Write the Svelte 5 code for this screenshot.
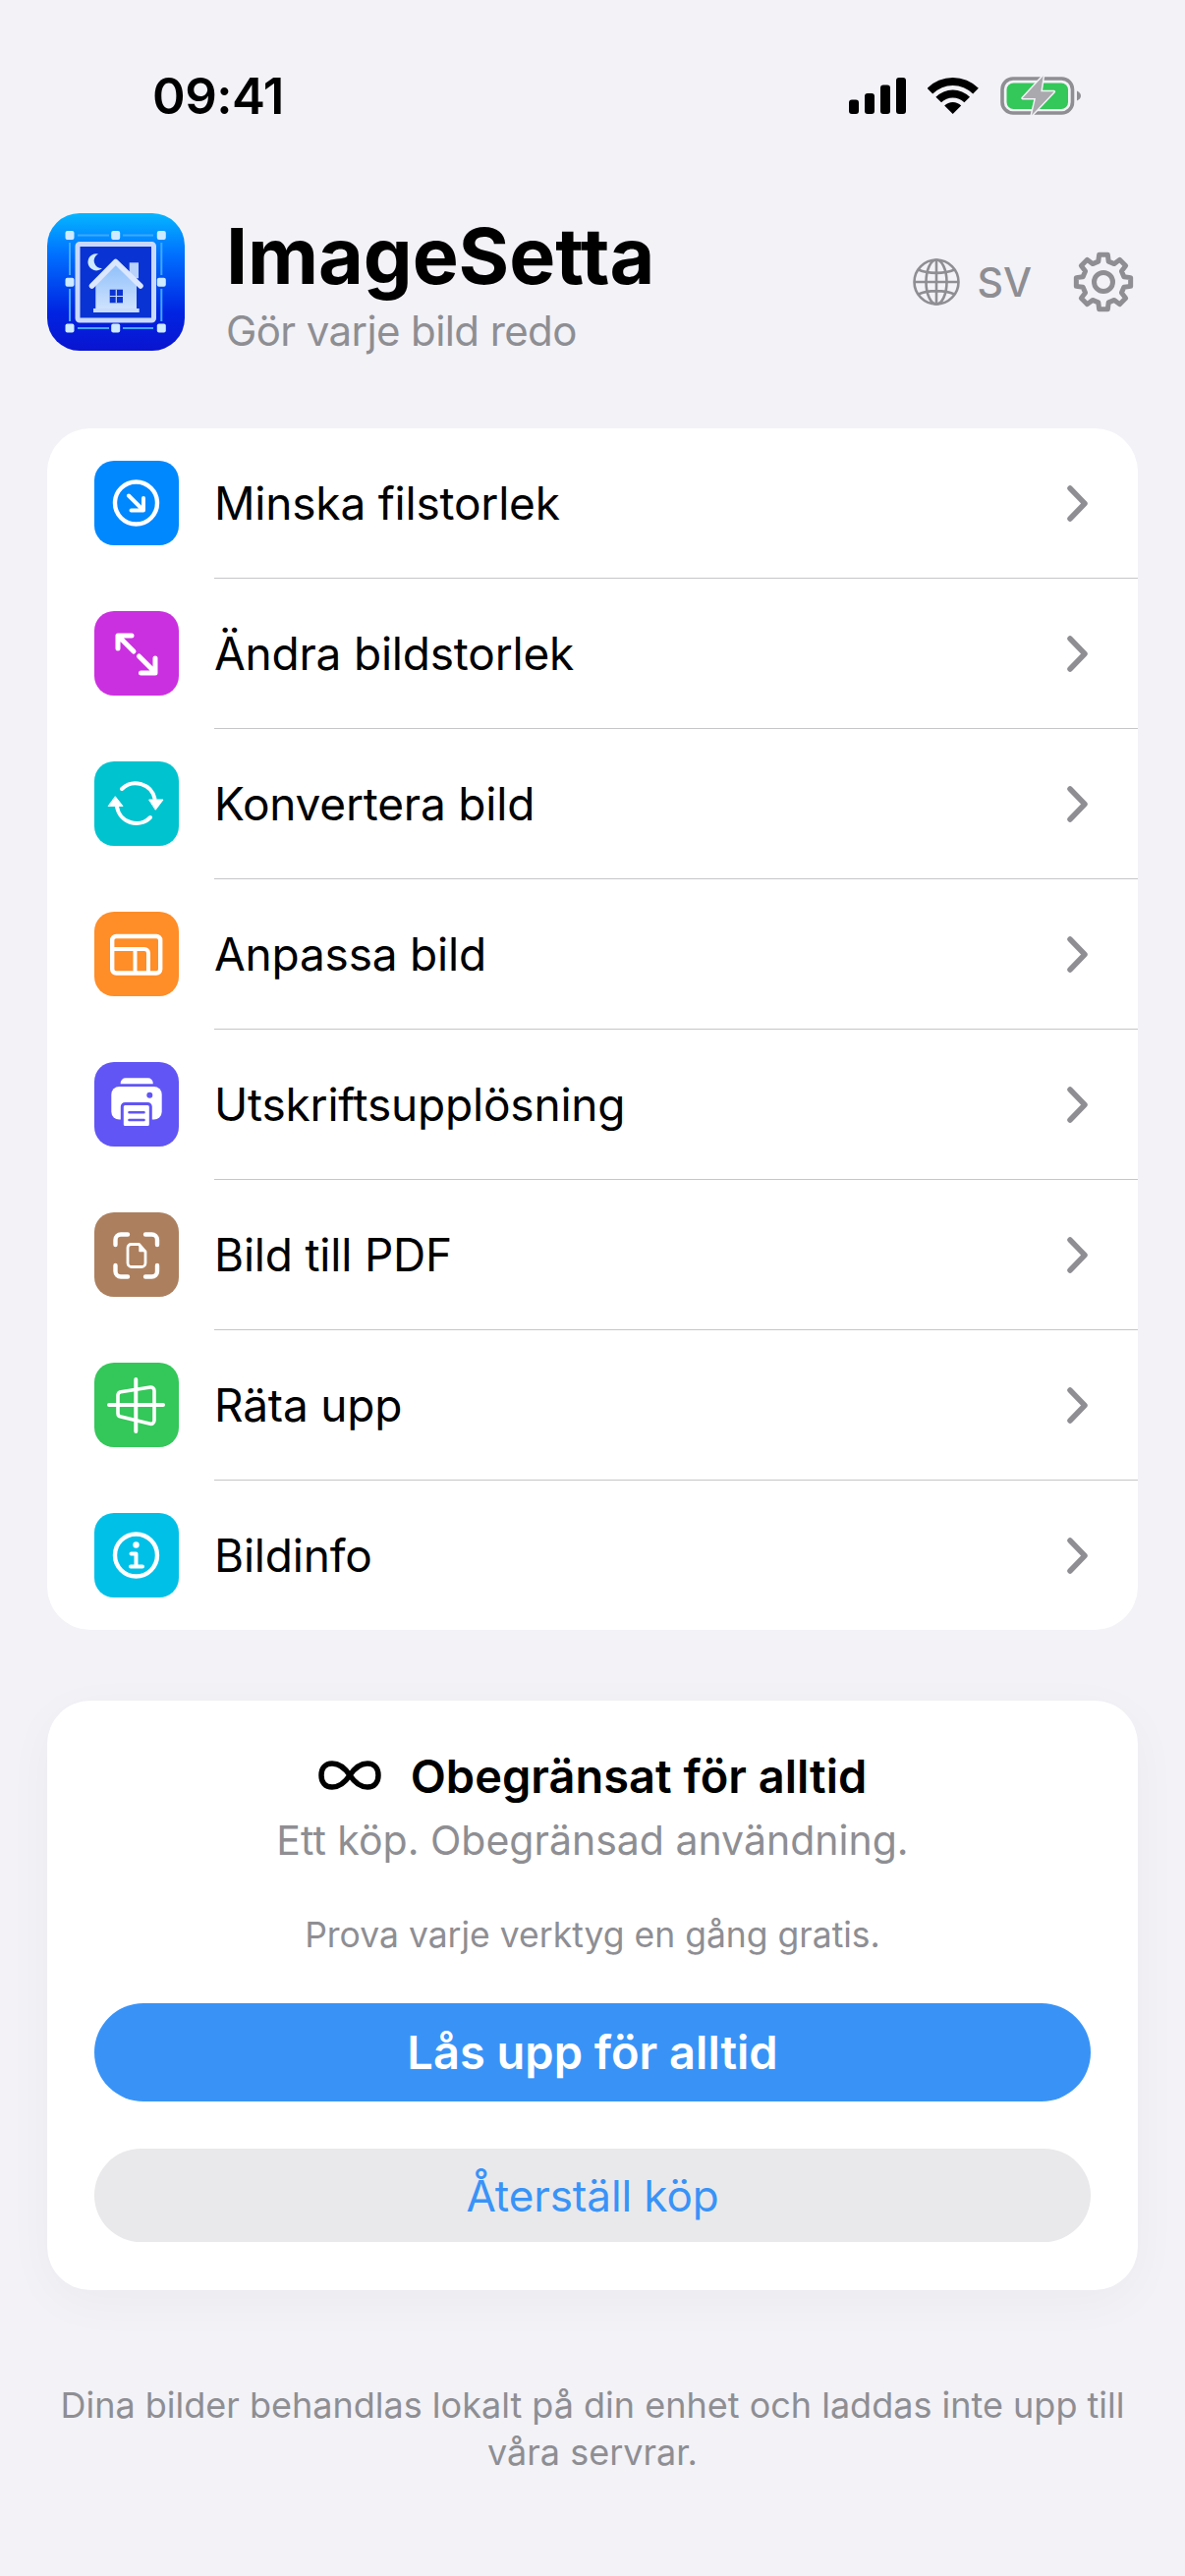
<script>
	const tools = [
		{ label: 'Minska filstorlek', color: '#0088ff', icon: shrink },
		{ label: 'Ändra bildstorlek', color: '#cb30e0', icon: resize },
		{ label: 'Konvertera bild', color: '#00c3d0', icon: convert },
		{ label: 'Anpassa bild', color: '#ff8d28', icon: fit },
		{ label: 'Utskriftsupplösning', color: '#6155f5', icon: printer },
		{ label: 'Bild till PDF', color: '#ac7f5e', icon: pdf },
		{ label: 'Räta upp', color: '#34c759', icon: straighten },
		{ label: 'Bildinfo', color: '#00c0e8', icon: info }
	];

	// eight rounded teeth around (32, 32)
	function gearPath() {
		const pt = (r, deg) => {
			const a = ((deg - 90) * Math.PI) / 180;
			return `${(32 + r * Math.cos(a)).toFixed(2)} ${(32 + r * Math.sin(a)).toFixed(2)}`;
		};
		let d = '';
		for (let k = 0; k < 8; k++) {
			const c = k * 45;
			d += `${k ? 'L' : 'M'}${pt(21.5, c - 14)} L${pt(28, c - 9)} L${pt(28, c + 9)} L${pt(21.5, c + 14)} `;
		}
		return d + 'Z';
	}
</script>

{#snippet shrink()}
	<circle cx="42.500" cy="43" r="21.500" stroke-width="4.400" />
	<path d="M35 35.500 49.500 50M37.500 50.500H50V38" stroke-width="4" />
{/snippet}

{#snippet resize()}
	<path d="M24 38V25H38M25 26 40 41M47.500 63H62V48M45.500 46 60.500 61" stroke-width="5" />
{/snippet}

{#snippet convert()}
	<path d="M28 28A20 20 0 0 1 61.500 38M57 57A20 20 0 0 1 23 46" stroke-width="4" />
	<path class="solid" d="M56 39H70L62.500 49ZM14.500 45.500H29L21.500 36Z" stroke-width="1" />
{/snippet}

{#snippet fit()}
	<rect x="18.200" y="25" width="49" height="37.500" rx="4" stroke-width="4.400" />
	<path d="M18 38H51a4 4 0 0 1 4 4V62M41.500 38V62" stroke-width="4" />
{/snippet}

{#snippet printer()}
	<path class="solid bare" d="M26.700 22.300V21a5 5 0 0 1 5-4.700H54.700a5 5 0 0 1 5 4.700v1.300Z" />
	<rect class="solid bare" x="17.300" y="25" width="51.400" height="33.500" rx="8" />
	<circle class="cut" cx="56.300" cy="33.700" r="3" />
	<rect class="solid paper" x="28.300" y="42.500" width="29" height="24" rx="3" stroke-width="3" />
	<path class="dark" d="M35.500 51.300H50.500M35.500 59H50.500" stroke-width="2.600" />
{/snippet}

{#snippet pdf()}
	<path d="M21.500 33V28a5.500 5.500 0 0 1 5.500-5.500H34M52 22.500h6.500a5.500 5.500 0 0 1 5.500 5.500v5M64 54v6a5.500 5.500 0 0 1-5.500 5.500H52M34 65.500H27a5.500 5.500 0 0 1-5.500-5.500V54" stroke-width="4.400" />
	<path d="M37.500 32.500H45.500L52 40V51.500a4 4 0 0 1-4 4H38a4 4 0 0 1-4-4V36a3.500 3.500 0 0 1 3.500-3.500Z" stroke-width="2.800" />
	<path class="solid" d="M46 33.500V39.500H51.500Z" stroke-width="1.400" />
{/snippet}

{#snippet straighten()}
	<path d="M42.300 17V70M15 43H70" stroke-width="4" />
	<path d="M27 29.800 57 25a3.500 3.500 0 0 1 4 3.500V59a3.500 3.500 0 0 1-4 3.300L27 55a3.500 3.500 0 0 1-3-3.500V33a3.500 3.500 0 0 1 3-3.200Z" stroke-width="3.600" />
{/snippet}

{#snippet info()}
	<circle cx="42.500" cy="43" r="21.500" stroke-width="4.400" />
	<circle class="solid bare" cx="42.500" cy="32.500" r="3.200" />
	<path d="M37.500 41.500H42.500V54M37 54.500H49" stroke-width="4" />
{/snippet}

<main class="screen">
	<div class="status">
		<span class="time">09:41</span>
		<div class="status-icons">
			<svg width="58" height="37" viewBox="0 0 58 37" fill="#000">
				<rect x="0" y="22.500" width="10" height="14.500" rx="3" />
				<rect x="16" y="16" width="10" height="21" rx="3" />
				<rect x="32" y="7.500" width="10" height="29.500" rx="3" />
				<rect x="48" y="0" width="10" height="37" rx="3" />
			</svg>
			<svg width="52" height="37" viewBox="0 0 52 37" fill="#000">
				<path d="M-.46 10.840A37 37 0 0 1 51.860 10.840L46.200 16.500A29 29 0 0 0 5.200 16.500Z" />
				<path d="M8.400 19.700A24.500 24.500 0 0 1 43 19.700L37.370 25.330A16.500 16.500 0 0 0 14.030 25.330Z" />
				<path d="M17.200 28.500A12 12 0 0 1 34.200 28.500L25.700 37Z" />
			</svg>
			<svg class="battery" width="82" height="39" viewBox="0 0 82 39">
				<rect x="2" y="2" width="71.500" height="35" rx="11" fill="none" stroke="#8e8e93" stroke-width="3.600" />
				<rect x="6.500" y="6.500" width="62.500" height="26.500" rx="7" fill="#34c759" />
				<path d="M78 14.500c2.500 1 4 3 4 5s-1.500 4-4 5Z" fill="#8e8e93" />
				<path d="M43.700-.7 22.700 22H36L32 39.300 54.700 15.300H41.300Z" fill="#a9a9ae" stroke="#f2f2f7" stroke-width="3" stroke-linejoin="round" paint-order="stroke" />
			</svg>
		</div>
	</div>

	<header class="head">
		<svg class="logo" width="140" height="140" viewBox="0 0 140 140">
			<defs>
				<linearGradient id="logo-bg" x1="0" y1="0" x2="0" y2="1">
					<stop offset="0" stop-color="#05b6ff" />
					<stop offset="0.3" stop-color="#0070ff" />
					<stop offset="0.72" stop-color="#0024e2" />
					<stop offset="1" stop-color="#0a14d0" />
				</linearGradient>
				<linearGradient id="logo-house" x1="0" y1="0" x2="0" y2="1">
					<stop offset="0" stop-color="#8fc0fb" />
					<stop offset="1" stop-color="#d3e4fd" />
				</linearGradient>
			</defs>
			<rect width="140" height="140" rx="33" fill="url(#logo-bg)" />
			<path d="M31 22.500H63M77 22.500H108M31 117H63M77 117H108M23 30V63M23 77V110M116.300 30V63M116.300 77V110" stroke="#3fa8ff" stroke-width="2" fill="none" />
			<g fill="#cdeafe">
				<rect x="18.500" y="18" width="9" height="9" rx="2" />
				<rect x="65.200" y="18" width="9" height="9" rx="2" />
				<rect x="111.800" y="18" width="9" height="9" rx="2" />
				<rect x="18.500" y="65.800" width="9" height="9" rx="2" />
				<rect x="111.800" y="65.800" width="9" height="9" rx="2" />
				<rect x="18.500" y="112.500" width="9" height="9" rx="2" />
				<rect x="65.200" y="112.500" width="9" height="9" rx="2" />
				<rect x="111.800" y="112.500" width="9" height="9" rx="2" />
			</g>
			<rect x="31" y="31.500" width="77.500" height="77.500" rx="2" fill="#0a33d4" stroke="#c9d9fd" stroke-width="5" />
			<path d="M52 41.400A8.600 8.600 0 1 0 56 56 7.700 7.700 0 0 1 52 41.400Z" fill="#cfeaff" />
			<rect x="83.700" y="50.300" width="9.300" height="16" fill="#b9d2fb" />
			<path d="M49.300 73 69.700 53 91 73V100H49.300Z" fill="url(#logo-house)" />
			<path d="M45.500 74 69.700 49.500 95 74" fill="none" stroke="#dbe7fe" stroke-width="5.500" stroke-linecap="round" stroke-linejoin="round" />
			<rect x="47" y="97" width="46.700" height="4" fill="#c7dcfc" />
			<rect x="63.700" y="77.700" width="13.300" height="13.600" fill="#0a33d4" />
			<path d="M70.300 77.700V91.300M63.700 84.500H77" stroke="#c4dafc" stroke-width="1.200" />
		</svg>
		<div class="brand">
			<h1>ImageSetta</h1>
			<p>Gör varje bild redo</p>
		</div>
		<div class="lang">
			<svg width="48" height="48" viewBox="0 0 48 48" fill="none" stroke="#8e8e93" stroke-width="2.600">
				<circle cx="24" cy="24" r="22.500" />
				<ellipse cx="24" cy="24" rx="10.500" ry="22.500" />
				<path d="M24 1.500V46.500M1.500 24H46.500M5.500 11.500C16 16 32 16 42.500 11.500M5.500 36.500C16 32 32 32 42.500 36.500" />
			</svg>
			<span>SV</span>
		</div>
		<svg class="gear" width="64" height="64" viewBox="0 0 64 64" fill="none" stroke="#8e8e93" stroke-width="5" stroke-linejoin="round">
			<path d={gearPath()} />
			<circle cx="32" cy="32" r="9.500" />
		</svg>
	</header>

	<section class="card tools">
		{#each tools as tool}
			<div class="row">
				<span class="tile" style="background: {tool.color}">
					<svg width="86" height="86" viewBox="0 0 86 86">
						{@render tool.icon()}
					</svg>
				</span>
				<div class="row-body">
					<span class="row-label">{tool.label}</span>
					<svg width="21" height="37" viewBox="0 0 21 37" fill="none" stroke="#8e8e93" stroke-width="5.500" stroke-linecap="round" stroke-linejoin="round">
						<path d="M3 3 18 18.500 3 34" />
					</svg>
				</div>
			</div>
		{/each}
	</section>

	<section class="card offer">
		<div class="offer-title">
			<svg width="64" height="30" viewBox="0 0 64 30" fill="none" stroke="#000" stroke-width="5.500">
				<path d="M32 15C26 6 20 3 14 3 7 3 3 8 3 15 3 22 7 27 14 27 20 27 26 24 32 15 38 6 44 3 50 3 57 3 61 8 61 15 61 22 57 27 50 27 44 27 38 24 32 15Z" />
			</svg>
			<h2>Obegränsat för alltid</h2>
		</div>
		<p class="offer-sub">Ett köp. Obegränsad användning.</p>
		<p class="offer-note">Prova varje verktyg en gång gratis.</p>
		<button class="unlock">Lås upp för alltid</button>
		<button class="restore">Återställ köp</button>
	</section>

	<p class="foot">Dina bilder behandlas lokalt på din enhet och laddas inte upp till våra servrar.</p>
</main>

<style>
	:global(body) {
		margin: 0;
		background: #f2f2f7;
	}
	.screen {
		width: 1206px;
		height: 2622px;
		overflow: hidden;
		background: #f2f2f7;
		font-family: Inter, "Liberation Sans", sans-serif;
		color: #000;
	}
	.status {
		display: flex;
		justify-content: space-between;
		align-items: center;
		height: 37px;
		padding: 79px 106px 0 155px;
	}
	.time {
		font-size: 51px;
		font-weight: 600;
		letter-spacing: -0.5px;
		line-height: 37px;
	}
	.status-icons {
		display: flex;
		align-items: center;
		gap: 22px;
	}
	.battery {
		overflow: visible;
	}
	.head {
		display: flex;
		align-items: center;
		margin-top: 101px;
		padding: 0 51px 0 48px;
		height: 140px;
	}
	.logo {
		flex: none;
	}
	.brand {
		flex: 1;
		margin-left: 42px;
	}
	h1 {
		margin: 0;
		font-size: 79px;
		font-weight: 700;
		letter-spacing: -0.1px;
		line-height: 94px;
	}
	.brand p {
		margin: 6px 0 0;
		font-size: 42px;
		line-height: 48px;
		letter-spacing: -0.6px;
		color: #8e8e93;
	}
	.lang {
		display: flex;
		align-items: center;
		gap: 17px;
		color: #8e8e93;
		font-size: 41px;
		font-weight: 500;
	}
	.gear {
		margin-left: 41px;
	}
	.card {
		margin: 0 48px;
		background: #fff;
		border-radius: 44px;
	}
	.tools {
		margin-top: 79px;
		overflow: hidden;
	}
	.row {
		display: flex;
		align-items: flex-start;
		height: 153px;
		padding-left: 48px;
	}
	.row:last-child {
		height: 152px;
	}
	.tile {
		flex: none;
		width: 86px;
		height: 86px;
		border-radius: 20px;
		margin: 33px 36px 0 0;
	}
	.tile svg {
		display: block;
		fill: none;
		stroke: #fff;
		stroke-linecap: round;
		stroke-linejoin: round;
	}
	.tile .solid {
		fill: #fff;
	}
	.tile .bare {
		stroke: none;
	}
	.tile .cut {
		fill: #6155f5;
		stroke: none;
	}
	.tile .paper {
		stroke: #6155f5;
	}
	.tile .dark {
		stroke: #6155f5;
	}
	.row-body {
		flex: 1;
		height: 152px;
		display: flex;
		align-items: center;
		justify-content: space-between;
		padding-right: 51px;
		border-bottom: 1px solid #c6c6c8;
	}
	.row:last-child .row-body {
		border-bottom: none;
	}
	.row-label {
		font-size: 46px;
		letter-spacing: -0.2px;
	}
	.offer {
		margin-top: 72px;
		padding: 52px 48px 49px;
		text-align: center;
		box-shadow: 0 12px 50px rgba(0, 0, 0, 0.035);
	}
	.offer-title {
		display: flex;
		justify-content: center;
		align-items: center;
		gap: 30px;
		height: 48px;
	}
	h2 {
		margin: 0;
		font-size: 47px;
		font-weight: 600;
	}
	.offer-sub {
		margin: 17px 0 0;
		font-size: 41px;
		line-height: 50px;
		color: #8e8e93;
	}
	.offer-note {
		margin: 50px 0 0;
		font-size: 35.500px;
		line-height: 44px;
		color: #8e8e93;
	}
	button {
		display: block;
		width: 100%;
		border: none;
		border-radius: 50px;
		font-family: inherit;
	}
	.unlock {
		height: 100px;
		margin-top: 47px;
		padding-bottom: 3px;
		background: #3993f7;
		color: #fff;
		font-size: 47px;
		font-weight: 600;
	}
	.restore {
		height: 95px;
		margin-top: 48px;
		background: #e9e9eb;
		color: #3993f7;
		font-size: 44px;
		letter-spacing: -0.1px;
	}
	.foot {
		margin: 93px 48px 0;
		font-size: 36px;
		line-height: 48px;
		text-align: center;
		color: #8e8e93;
	}
</style>
